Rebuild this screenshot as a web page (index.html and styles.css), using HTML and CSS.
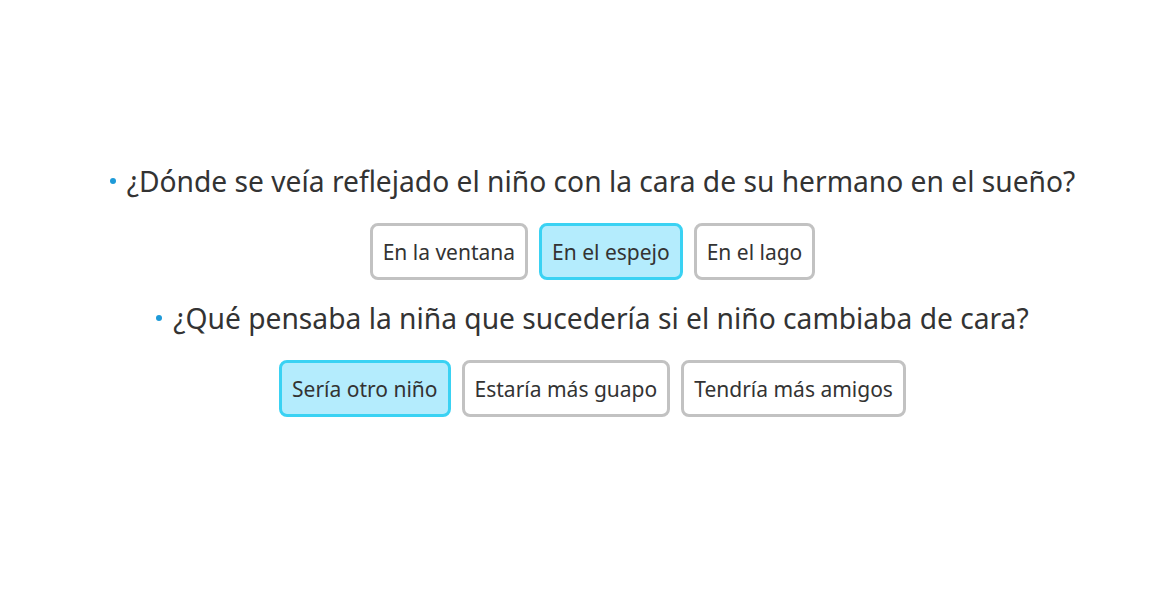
FILE: index.html
```html
<!DOCTYPE html>
<html lang="es">
<head>
<meta charset="utf-8">
<link rel="stylesheet" href="styles.css">
</head>
<body>
<main class="quiz">
  <section class="question">
    <h2 class="prompt"><span class="dot"></span>¿Dónde se veía reflejado el niño con la cara de su hermano en el sueño?</h2>
    <div class="options">
      <button class="opt">En la ventana</button>
      <button class="opt selected">En el espejo</button>
      <button class="opt">En el lago</button>
    </div>
  </section>
  <section class="question">
    <h2 class="prompt"><span class="dot"></span>¿Qué pensaba la niña que sucedería si el niño cambiaba de cara?</h2>
    <div class="options">
      <button class="opt selected">Sería otro niño</button>
      <button class="opt">Estaría más guapo</button>
      <button class="opt">Tendría más amigos</button>
    </div>
  </section>
</main>
</body>
</html>
```
FILE: styles.css
```css
html, body {
  margin: 0;
  padding: 0;
  background: #ffffff;
}
body {
  font-family: "Noto Sans", "Open Sans", sans-serif;
  color: #333333;
}
.quiz {
  height: 593px;
  box-sizing: border-box;
  padding-bottom: 13px;
  padding-left: 16px;
  display: flex;
  flex-direction: column;
  align-items: center;
  justify-content: center;
  gap: 20px;
}
.question {
  display: flex;
  flex-direction: column;
  align-items: center;
}
.prompt {
  margin: 0;
  font-weight: 400;
  font-size: 28.2px;
  line-height: 36px;
  height: 40px;
  box-sizing: border-box;
  padding-bottom: 4px;
  display: flex;
  align-items: center;
  white-space: nowrap;
}
.dot {
  width: 6px;
  height: 6px;
  border-radius: 50%;
  background: #1e9ad8;
  margin-right: 11px;
}
.options {
  display: flex;
  gap: 11px;
  margin-top: 20px;
}
.opt {
  font-family: inherit;
  font-size: 21px;
  color: #333333;
  background: #ffffff;
  border: 3px solid #c2c2c2;
  border-radius: 8px;
  height: 57px;
  padding: 0 10px;
  cursor: pointer;
}
.opt.selected {
  background: #b4ecfd;
  border-color: #3ad2f3;
}
```
